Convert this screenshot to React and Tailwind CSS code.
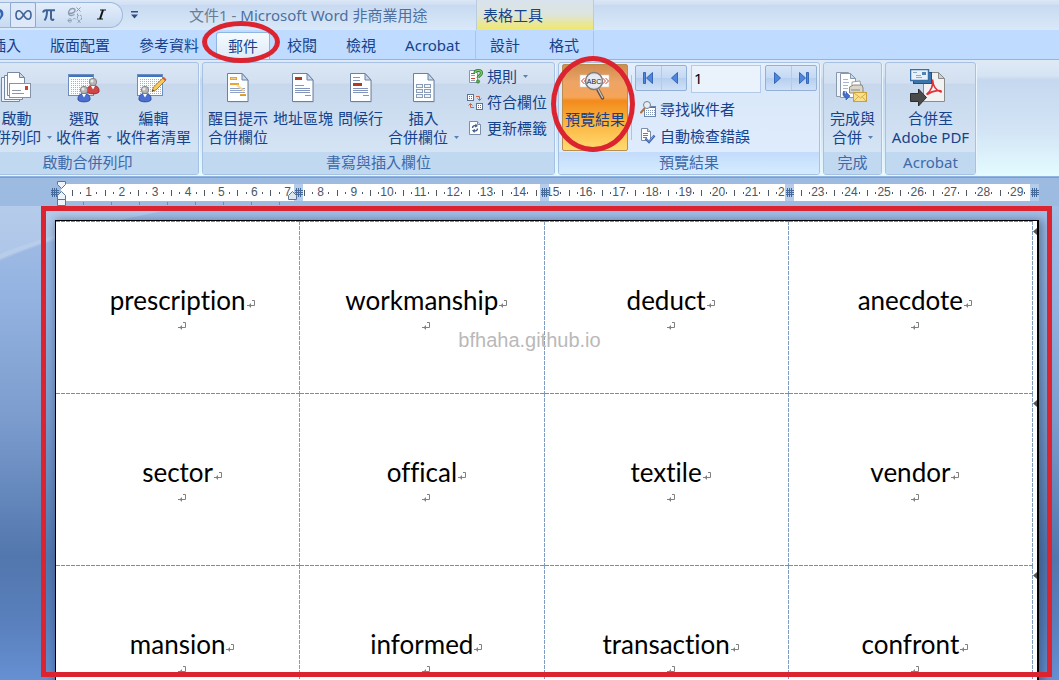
import React from "react";

const WORDS = [
  ["prescription", "workmanship", "deduct", "anecdote"],
  ["sector", "offical", "textile", "vendor"],
  ["mansion", "informed", "transaction", "confront"],
];

/* ---------- small marks ---------- */

function Caret() {
  return (
    <svg width="5" height="3" viewBox="0 0 5 3" className="shrink-0" aria-hidden="true">
      <path d="M0 0h5L2.500 3z" fill="#5b80b5" />
    </svg>
  );
}

function ReturnMark() {
  return (
    <svg width="8" height="8" viewBox="0 0 8 8" fill="none" stroke="#808080" aria-hidden="true">
      <path d="M5 .5h2.500v5h-6" />
      <path d="M3.500 3.500v4M2.500 4.500v2M0 5.500h2" />
    </svg>
  );
}

function GridMark() {
  return (
    <svg width="9" height="17" viewBox="0 0 9 17" className="bg-[#b5cdea]" aria-hidden="true">
      <path d="M2.500 4v9M4.500 4v9M6.500 4v9M1 6.500h8M1 8.500h8M1 10.500h8" stroke="#456a99" fill="none" />
    </svg>
  );
}

/* ---------- large icons ---------- */

function Sheet({ x = 0, y = 0 }) {
  return (
    <g transform={`translate(${x} ${y})`}>
      <path d="M1.500 1.500h14l6 6v22h-20z" fill="#8fa0b8" opacity=".45" />
      <path d="M.5 .5h14.500l6 6.500v21.500H.5z" fill="#fdfeff" stroke="#6d819f" />
      <path d="M15 .5v6.500h6z" fill="#c9d9ef" stroke="#6d819f" />
    </g>
  );
}

function Person({ x, y, fill, dark }) {
  return (
    <g transform={`translate(${x} ${y})`}>
      <path d="M0 14c-.5-4 1.500-6.500 6-6.500s6.500 2.500 6 6.500c-1.500 2.500-10.500 2.500-12 0z" fill={fill} stroke={dark} strokeWidth=".8" />
      <path d="M4 8l2 3.500L8 8z" fill="#fff" />
      <circle cx="6" cy="4" r="3.700" fill="#b5b5b5" stroke="#777" strokeWidth=".8" />
      <circle cx="5" cy="3" r="1.500" fill="#e9e9e9" />
    </g>
  );
}

function Calendar() {
  const dots = [];
  for (let r = 0; r < 8; r++) {
    for (let c = 0; c < 11; c++) dots.push(<rect key={`${r}-${c}`} x={3 + c * 2} y={7 + r * 2} width="1" height="1" />);
  }
  return (
    <>
      <rect x=".5" y="2.500" width="25" height="21" fill="#fbfdff" stroke="#6c8dbd" />
      <rect x="1" y="3" width="24" height="2" fill="#3f74c4" />
      <g fill="#a3b3cc">{dots}</g>
    </>
  );
}

function StartMergeIcon() {
  return (
    <svg width="32" height="32" viewBox="0 0 32 32" aria-hidden="true">
      <path d="M1.500 5.500h14l4 4v20h-18z" fill="#eef3fa" stroke="#7589a5" />
      <path d="M4.500 3.500h14l4 4v20h-18z" fill="#f5f8fc" stroke="#7589a5" />
      <path d="M7.500 .5h12l5 5v18h-17z" fill="#fff" stroke="#7589a5" />
      <path d="M19.500 .5v5h5z" fill="#cbd9ec" stroke="#7589a5" />
      <rect x="9.500" y="11.500" width="21" height="14" fill="#fff" stroke="#8493a8" />
      <rect x="25" y="14" width="3" height="4" fill="#c9442f" />
      <path d="M12 18.500h9M12 21.500h12" stroke="#8c97a8" />
    </svg>
  );
}

function SelectRecipientsIcon() {
  return (
    <svg width="32" height="32" viewBox="0 0 32 32" aria-hidden="true">
      <Calendar />
      <Person x={19} y={6} fill="#d04545" dark="#8f2525" />
      <Person x={10} y={14} fill="#4a6fd0" dark="#2b4690" />
    </svg>
  );
}

function EditRecipientsIcon() {
  return (
    <svg width="32" height="32" viewBox="0 0 32 32" aria-hidden="true">
      <Calendar />
      <Person x={2} y={14} fill="#4a6fd0" dark="#2b4690" />
      <path d="M15 19.500l1.500-4.500L26.500 5.500l2.500 2.500-10 10z" fill="#f6c95a" stroke="#9b6c1c" strokeWidth=".8" />
      <path d="M25.500 6.500l1.500-1.500 2.500 2.500-1.500 1.500z" fill="#d8573b" />
      <path d="M15 19.500l.8-2 1.200 1.200z" fill="#333" />
    </svg>
  );
}

function HighlightIcon() {
  return (
    <svg width="32" height="32" viewBox="0 0 32 32" aria-hidden="true">
      <Sheet x={5} y={1} />
      <path d="M8 5.500h7M8 16.500h15M8 18.500h15M8 20.500h15M18 23.500h6" stroke="#8fa1c6" />
      <rect x="8.500" y="5.500" width="6" height="2" fill="#f6d08a" stroke="#e6a630" />
      <rect x="8" y="11" width="9" height="2" fill="#e6a630" />
      <path d="M15 13l7 6" stroke="#fbd793" strokeWidth="2" />
      <path d="M18 22.500h6" stroke="#e6a630" />
    </svg>
  );
}

function AddressIcon() {
  return (
    <svg width="32" height="32" viewBox="0 0 32 32" aria-hidden="true">
      <Sheet x={5} y={1} />
      <rect x="8" y="5" width="7" height="3" fill="#b23a20" />
      <path d="M8 13.500h9M8 16.500h15M8 18.500h15M8 20.500h15M18 23.500h6" stroke="#8495bb" />
    </svg>
  );
}

function GreetingIcon() {
  return (
    <svg width="32" height="32" viewBox="0 0 32 32" aria-hidden="true">
      <Sheet x={5} y={1} />
      <rect x="8" y="11" width="9" height="3" fill="#b23a20" />
      <path d="M8 5.500h7M8 8.500h7M8 16.500h15M8 18.500h15M8 20.500h15M18 23.500h6" stroke="#8495bb" />
    </svg>
  );
}

function InsertFieldIcon() {
  return (
    <svg width="32" height="32" viewBox="0 0 32 32" aria-hidden="true">
      <Sheet x={5} y={1} />
      <g fill="#f1f5fb" stroke="#8b9cb9">
        <rect x="8.500" y="12.500" width="6" height="3" />
        <rect x="16.500" y="12.500" width="6" height="3" />
        <rect x="8.500" y="17.500" width="6" height="3" />
        <rect x="16.500" y="17.500" width="6" height="3" />
        <rect x="8.500" y="22.500" width="6" height="3" />
        <rect x="16.500" y="22.500" width="6" height="3" />
      </g>
    </svg>
  );
}

function PreviewIcon() {
  return (
    <svg width="32" height="32" viewBox="0 0 32 32" aria-hidden="true">
      <rect x="1" y="4" width="29" height="12" fill="#fff" stroke="#d9cbb8" strokeWidth=".6" />
      <path d="M5.500 7l-3 3 3 3M8.500 7l-3 3 3 3M23.500 7l3 3-3 3M26.500 7l3 3-3 3" stroke="#c9442f" fill="none" />
      <path d="M18.500 18l5 9" stroke="#5f5148" strokeWidth="3.500" strokeLinecap="round" />
      <path d="M19 18l4.500 8.500" stroke="#c9bfb6" strokeWidth="1.500" strokeLinecap="round" />
      <circle cx="15" cy="10" r="8.500" fill="#e2e9ef" fillOpacity=".9" stroke="#7b7b80" strokeWidth="1.500" />
      <text x="15" y="13" textAnchor="middle" fontSize="7" fontFamily="Liberation Sans, sans-serif" fill="#222">ABC</text>
    </svg>
  );
}

function FinishIcon() {
  return (
    <svg width="32" height="32" viewBox="0 0 32 32" aria-hidden="true">
      <path d="M.5 .5h12v24H.5z" fill="#f0f4fa" stroke="#8a98ad" />
      <path d="M4.500 1.500h10l5 5v19h-15z" fill="#fff" stroke="#8a98ad" />
      <path d="M14.500 1.500v5h5z" fill="#cbd9ec" stroke="#8a98ad" />
      <path d="M7 7.500h5M7 10.500h6M7 13.500h5M7 16.500h5M7 19.500h4" stroke="#a9b7cb" />
      <path d="M16 10l8-1 1 6h-9z" fill="#fff" stroke="#888" strokeWidth=".8" />
      <path d="M13.500 15l4-2h8.500l1 3v5h-13.500z" fill="#d9d6cc" stroke="#77736b" strokeWidth=".8" />
      <path d="M15 18h9" stroke="#8c887d" />
      <rect x="17.500" y="20.500" width="13" height="9" fill="#fbe08a" stroke="#c9a03f" />
      <path d="M18 21l6.500 5 6-5M18 29l4.500-4.500M30 29l-4-4.500" stroke="#c9a03f" fill="none" strokeWidth=".8" />
      <path d="M8 19c-2 3-1 6 2 6.500v2.500l4-4-4-4v2.500c-1 0-1.500-1.500-2-3.500z" fill="#3f6fd0" stroke="#2b4f9c" strokeWidth=".6" />
    </svg>
  );
}

function AcrobatIcon() {
  return (
    <svg width="42" height="38" viewBox="0 0 42 38" aria-hidden="true">
      <path d="M13.500 3.500h15l6 6v23h-21z" fill="#f2f2f2" stroke="#8b8b8b" />
      <path d="M28.500 3.500v6h6z" fill="#cfcfcf" stroke="#8b8b8b" />
      <path d="M22.500 10.500c.5 6 3 11 8.500 12.500 1.500-2-7-2.500-14 2.500M22.500 10.500c1.500 5-2 12-6 15" stroke="#e0323a" strokeWidth="1.600" fill="none" strokeLinejoin="round" />
      <rect x="3.500" y="3.500" width="18" height="11" fill="#3d75ad" stroke="#22507f" />
      <rect x=".5" y=".5" width="18" height="11" fill="#e9f2fb" stroke="#3a70a8" strokeWidth="1.500" />
      <rect x="12" y="3" width="4" height="3" fill="#4f85bb" />
      <path d="M3 3.500h4M6 6.500h5M6 8.500h6" stroke="#8dabc9" />
      <path d="M.5 24.500h8v-4.500l8 8.500-8 8.500v-4.500h-8z" fill="#4a4a4a" stroke="#2d2d2d" />
    </svg>
  );
}

/* ---------- small icons ---------- */

function RulesIcon() {
  return (
    <svg width="16" height="16" viewBox="0 0 16 16" aria-hidden="true">
      <path d="M2.500 2.500h6l2 2v10h-8z" fill="#fff" stroke="#8a97aa" />
      <path d="M4 5.500h4M4 10.500h4" stroke="#c9442f" />
      <path d="M4 7.500h4M4 12.500h4" stroke="#8fa0bf" />
      <path d="M8 5c0-3.500 6.500-3.500 6.500 0 0 2.500-3.500 2.500-3.500 5" fill="none" stroke="#2f7d2f" strokeWidth="3" />
      <path d="M8 5c0-3.500 6.500-3.500 6.500 0 0 2.500-3.500 2.500-3.500 5" fill="none" stroke="#7cc96a" strokeWidth="1.400" />
      <circle cx="11" cy="13.500" r="1.600" fill="#5cb04a" stroke="#2f7d2f" strokeWidth=".8" />
    </svg>
  );
}

function MatchIcon() {
  return (
    <svg width="16" height="16" viewBox="0 0 16 16" aria-hidden="true">
      <g fill="#fff" stroke="#5d7190">
        <rect x=".5" y=".5" width="6" height="6" />
        <rect x="9.500" y="9.500" width="6" height="6" />
      </g>
      <path d="M2 2.500h3M2 4.500h3M11 11.500h3M11 13.500h3" stroke="#5d7190" strokeDasharray="1 1" />
      <path d="M9 2.500h3.500V6M10.500 4.500l2 2 2-2M7 13.500H3.500V10M1.500 11.500l2-2 2 2" stroke="#d2603f" fill="none" />
    </svg>
  );
}

function UpdateIcon() {
  return (
    <svg width="16" height="16" viewBox="0 0 16 16" aria-hidden="true">
      <path d="M2.500 1.500h8l3 3v10h-11z" fill="#fff" stroke="#7d8da5" />
      <path d="M10.500 1.500v3h3" fill="#cbd9ec" stroke="#7d8da5" />
      <path d="M5.500 8c0-2 2-3 4-2M10.500 8.500c0 2-2 3-4 2" fill="none" stroke="#3d5d90" strokeWidth="1.400" />
      <path d="M8.500 3.500l2.500 2.500-3 1.500zM7.500 13L5 10.500l3-1.500z" fill="#3d5d90" />
    </svg>
  );
}

function FindIcon() {
  return (
    <svg width="16" height="16" viewBox="0 0 16 16" aria-hidden="true">
      <rect x="4.500" y="5.500" width="11" height="10" fill="#fff" stroke="#6c86ad" />
      <path d="M5 6.500h10" stroke="#3f74c4" />
      <path d="M6 9.500h9M6 11.500h9M6 13.500h9" stroke="#7f96b8" strokeDasharray="1 1" />
      <path d="M4.500 7.500l-3.500 4" stroke="#b5713c" strokeWidth="2" strokeLinecap="round" />
      <circle cx="7" cy="4" r="3.500" fill="#e5eef7" stroke="#777e8a" />
    </svg>
  );
}

function CheckIcon() {
  return (
    <svg width="16" height="16" viewBox="0 0 16 16" aria-hidden="true">
      <path d="M1.500 .5h6l3 3v9h-9z" fill="#fff" stroke="#7d8da5" />
      <path d="M7.500 .5v3h3" fill="#cbd9ec" stroke="#7d8da5" />
      <path d="M3 5.500h5M3 7.500h5M3 9.500h4" stroke="#5a7fc0" />
      <path d="M5.500 10.500l3.500 3.500 5.500-6.500" stroke="#3d62ad" strokeWidth="2.400" fill="none" />
      <path d="M6 10.500l3 3 5-6" stroke="#86a8e4" strokeWidth="1" fill="none" />
    </svg>
  );
}

/* ---------- ribbon parts ---------- */

function BigButton({ icon, lines, caret }) {
  return (
    <button type="button" className="flex shrink-0 flex-col items-center">
      <span className="flex h-[38px] items-center">{icon}</span>
      <span className="flex flex-col items-center pt-[2px]">
        {lines.map((line, i) => (
          <span key={line} className="flex h-[19px] items-center gap-[6px] whitespace-nowrap">
            {line}
            {caret && i === lines.length - 1 && <Caret />}
          </span>
        ))}
      </span>
    </button>
  );
}

function SmallButton({ icon, label, caret }) {
  return (
    <button type="button" className="flex h-[26px] items-center gap-1 whitespace-nowrap">
      {icon}
      {label}
      {caret && (
        <span className="pl-[2px]">
          <Caret />
        </span>
      )}
    </button>
  );
}

function Group({ title, width, active, children }) {
  return (
    <section
      aria-label={title}
      className={`flex shrink-0 flex-col overflow-hidden rounded-[3px] border border-[#a6c1e3] shadow-[1px_1px_0_#eaf5fe] ${width} ${
        active
          ? "bg-[linear-gradient(#e6f0fc,#d9e8fa_20%,#e0edfd)]"
          : "bg-[linear-gradient(#dae6f4,#d2e0f1_18%,#c7d8ed_19%,#d9e8f7)]"
      }`}
    >
      <div className="flex flex-1">{children}</div>
      <h2
        className={`flex h-[22px] items-center justify-center whitespace-nowrap pb-px text-[#3e6aaa] ${
          active ? "bg-[linear-gradient(#c3dcfb,#d5ecff)]" : "bg-[#c1d8f1]"
        }`}
      >
        {title}
      </h2>
    </section>
  );
}

function NavPair({ children }) {
  return (
    <div className="flex h-[26px] w-[52px] divide-x divide-[#b3cbe8] rounded-[2px] border border-[#93b0d6] bg-[linear-gradient(#d6e5f8,#c4d9f3_50%,#b6cfee_51%,#cfe1f8)]">
      {children}
    </div>
  );
}

function NavButton({ label, children }) {
  return (
    <button type="button" aria-label={label} className="flex flex-1 items-center justify-center">
      <svg width="12" height="12" viewBox="0 0 12 12" fill="#4d86dc" stroke="#2257ab" strokeWidth=".8">
        {children}
      </svg>
    </button>
  );
}

function Ribbon() {
  return (
    <div className="h-[118px] overflow-hidden border-y border-[#8fb5e3] bg-[linear-gradient(#dfeaf6,#d5e3f3_14%,#c5d8ef_17%,#d2e4f5_60%,#e4fbff)]">
      <div className="-ml-6 flex h-[115px] gap-[3px] pt-[2px]">
        <Group title="啟動合併列印" width="w-[223px]">
          <div className="flex flex-1 items-start justify-end gap-1 pr-[7px] pt-[6px]">
            <BigButton icon={<StartMergeIcon />} lines={["啟動", "合併列印"]} caret />
            <BigButton icon={<SelectRecipientsIcon />} lines={["選取", "收件者"]} caret />
            <BigButton icon={<EditRecipientsIcon />} lines={["編輯", "收件者清單"]} />
          </div>
        </Group>

        <Group title="書寫與插入欄位" width="w-[353px]">
          <div className="flex items-start gap-[5px] pl-[5px] pt-[6px]">
            <BigButton icon={<HighlightIcon />} lines={["醒目提示", "合併欄位"]} />
            <BigButton icon={<AddressIcon />} lines={["地址區塊"]} />
            <BigButton icon={<GreetingIcon />} lines={["問候行"]} />
            <BigButton icon={<InsertFieldIcon />} lines={["插入", "合併欄位"]} caret />
          </div>
          <div className="flex flex-1 flex-col pl-2">
            <SmallButton icon={<RulesIcon />} label="規則" caret />
            <SmallButton icon={<MatchIcon />} label="符合欄位" />
            <SmallButton icon={<UpdateIcon />} label="更新標籤" />
          </div>
        </Group>

        <Group title="預覽結果" width="w-[262px]" active>
          <div className="my-px ml-[3px] flex w-[66px] shrink-0">
            <button
              type="button"
              aria-pressed="true"
              className="flex flex-1 flex-col items-center rounded-[2px] border border-[#b98e51] bg-[linear-gradient(#cf8d4f,#eda466_20%,#f6a458_38%,#f28a1d_42%,#fbb03a_65%,#ffdb70)] pt-[3px]"
            >
              <span className="flex h-[38px] items-center">
                <PreviewIcon />
              </span>
              <span className="flex h-[26px] items-center whitespace-nowrap">預覽結果</span>
            </button>
          </div>
          <div className="mx-[3px] my-3 w-px bg-[#a9c4e6]" />
          <div className="flex flex-1 flex-col pr-[2px] pt-[2px]">
            <div className="flex items-start justify-between">
              <NavPair>
                <NavButton label="第一筆記錄">
                  <path d="M1.500 .5h2v11h-2zM10.500 .5v11L4.500 6z" />
                </NavButton>
                <NavButton label="上一筆記錄">
                  <path d="M9.500 .5v11L3.500 6z" />
                </NavButton>
              </NavPair>
              <input
                aria-label="記錄"
                defaultValue="1"
                className="h-[28px] w-[70px] border border-[#b3cbe8] bg-[#eaf2fc] px-[2px] pb-[2px] text-black"
              />
              <NavPair>
                <NavButton label="下一筆記錄">
                  <path d="M2.500 .5v11L8.500 6z" />
                </NavButton>
                <NavButton label="最後一筆記錄">
                  <path d="M8.500 .5h2v11h-2zM1.500 .5v11L7.500 6z" />
                </NavButton>
              </NavPair>
            </div>
            <div className="flex flex-col gap-px pl-[5px] pt-[3px]">
              <SmallButton icon={<FindIcon />} label="尋找收件者" />
              <SmallButton icon={<CheckIcon />} label="自動檢查錯誤" />
            </div>
          </div>
        </Group>

        <Group title="完成" width="w-[59px]">
          <div className="flex flex-1 justify-center pt-[6px]">
            <BigButton icon={<FinishIcon />} lines={["完成與", "合併"]} caret />
          </div>
        </Group>

        <Group title="Acrobat" width="w-[91px]">
          <div className="flex flex-1 justify-center pt-[6px]">
            <BigButton icon={<AcrobatIcon />} lines={["合併至", "Adobe PDF"]} />
          </div>
        </Group>
      </div>
    </div>
  );
}

/* ---------- title bar and tabs ---------- */

function TitleBar() {
  return (
    <header className="flex h-[30px] overflow-hidden bg-[linear-gradient(#dbe7f6,#d0dff2_16%,#c8daf1_18%,#d9e9f9)]">
      <div className="my-[2px] flex w-[123px] shrink-0 items-center rounded-r-full border border-l-0 border-[#9db8dc] bg-[linear-gradient(#e3eefb,#c8daf1)] pb-px">
        <button type="button" aria-label="復原" className="flex w-[10px] justify-start">
          <svg width="4" height="14" viewBox="0 0 4 14">
            <path d="M0 1c3 1 4 4 3 7l-3 4V9c1-2 1-4 0-5z" fill="#3565b5" />
          </svg>
        </button>
        <button
          type="button"
          aria-label="無限大"
          className="flex h-[26px] w-[26px] items-center justify-center rounded-[2px] border border-[#8ea9cc] bg-[#dde9f8]"
        >
          <svg width="17" height="12" viewBox="0 0 17 12" fill="none" stroke="#3f6396" strokeWidth="1.600">
            <path d="M8.500 6C6.500 3 5.500 1.800 4 1.800 2.300 1.800 1 3.500 1 6s1.300 4.200 3 4.200S6.500 9 8.500 6s3-4.200 4.500-4.200c1.700 0 3 1.700 3 4.200s-1.300 4.200-3 4.200S10.500 9 8.500 6z" />
          </svg>
        </button>
        <button type="button" aria-label="方程式" className="flex w-[26px] justify-center">
          <svg width="14" height="14" viewBox="0 0 14 14" fill="none" stroke="#3f6396">
            <path d="M1 4.500C1.500 2.500 2.500 2.200 4 2.200h9" strokeWidth="2" />
            <path d="M5 3c0 4-.5 7-2.500 9.500M9 3v7c0 2 1.500 2.500 3 1" strokeWidth="2" />
          </svg>
        </button>
        <button type="button" aria-label="指數" className="flex w-[26px] justify-center">
          <svg width="17" height="18" viewBox="0 0 17 18" fill="none" stroke="#8d9bb0">
            <path d="M2 7.500c4 0 6-1.500 6-3.500S3.500 1.500 2 5s1 6 5.500 3.500" strokeWidth="1.400" />
            <path d="M9.500 1.500l4 4M13.500 1.500l-4 4" />
            <path d="M10.500 7.500v6M10.500 10.500c1.500-2 4-1.500 4 0v3" strokeDasharray="2 1" />
            <path d="M1 14.500h3.500c0-2.500-3.500-2-3.500 0 0 2 2.500 2 3.500 1M6 13.500l1.500-1.500L9 13.500M10.500 13.500l3 3.500M13.500 13.500l-3 3.500" strokeWidth=".9" />
          </svg>
        </button>
        <button type="button" aria-label="斜體" className="flex w-[26px] justify-center">
          <svg width="11" height="11" viewBox="0 0 11 11" fill="none" stroke="#111">
            <path d="M4 1h6M1 10h6" strokeWidth="1.200" />
            <path d="M7 1L4 10" strokeWidth="2" />
          </svg>
        </button>
      </div>
      <button type="button" aria-label="自訂快速存取工具列" className="flex w-[22px] shrink-0 items-center justify-center">
        <svg width="7" height="8" viewBox="0 0 7 8" fill="#2c4f86">
          <path d="M0 0h7v1.500H0zM0 3.500h7L3.500 7.500z" />
        </svg>
      </button>
      <h1 className="ml-[44px] flex w-[287px] shrink-0 items-center gap-1 whitespace-nowrap text-[#4d6f9f]">
        <span className="text-[#6c7c92]">文件1 -</span>
        <span>Microsoft Word 非商業用途</span>
      </h1>
      <div className="flex w-[118px] shrink-0 items-center border-x border-[#b9cbdc] bg-[linear-gradient(#d9e3ee,#dde5da_50%,#f2e868)] pl-[6px] text-[#15428b]">
        表格工具
      </div>
    </header>
  );
}

function Tab({ children }) {
  return (
    <button type="button" role="tab" aria-selected="false" className="h-full shrink-0 whitespace-nowrap px-[14px]">
      {children}
    </button>
  );
}

function Tabs() {
  return (
    <nav className="h-[29px] bg-[#bfdbff]">
      <div role="tablist" className="-ml-6 flex h-full gap-px pl-px pt-px">
        <Tab>插入</Tab>
        <Tab>版面配置</Tab>
        <Tab>參考資料</Tab>
        <div className="relative z-10 flex shrink-0 px-[2px] pt-px">
          <button
            type="button"
            role="tab"
            aria-selected="true"
            className="rounded-t-[3px] border border-b-0 border-[#8fb5e3] bg-[linear-gradient(#f4faff,#dfeaf6)] px-[11px]"
          >
            郵件
          </button>
          <span className="pointer-events-none absolute -bottom-[4px] -left-[12px] -right-[8px] -top-[10px] rounded-[50%] border-[5px] border-[#dc2430]" />
        </div>
        <Tab>校閱</Tab>
        <Tab>檢視</Tab>
        <Tab>Acrobat</Tab>
        <div className="flex gap-px border-x border-[#a9c4e6]">
          <Tab>設計</Tab>
          <Tab>格式</Tab>
        </div>
      </div>
    </nav>
  );
}

/* ---------- ruler ---------- */

function Ruler() {
  const numbers = Array.from({ length: 29 }, (_, i) => i + 1);
  return (
    <div className="relative h-[29px] shrink-0 border-t border-[#7f9dc8] bg-[#9dbae0] pl-[55px] pr-[20px] pt-[6px]">
      <div className="flex h-[17px] bg-white pl-[13px] pr-[10px] font-['Liberation_Sans',sans-serif] text-xs font-normal leading-[17px] text-[#4c5866]">
        {numbers.map((n) => (
          <div key={n} className="grid flex-1 grid-cols-4 items-center justify-items-center">
            <span className="h-[6px] w-px bg-[#4c5866]" />
            <span className="h-[2px] w-px bg-[#4c5866]" />
            <span className="flex w-0 justify-center">{n}</span>
            <span className="h-[2px] w-px bg-[#4c5866]" />
          </div>
        ))}
      </div>
      <div className="absolute inset-y-[6px] left-[58px] right-[20px] grid grid-cols-4 justify-items-end">
        <GridMark />
        <GridMark />
        <GridMark />
        <GridMark />
      </div>
      <svg width="242" height="27" viewBox="0 0 242 27" className="absolute left-[50px] top-[2px]" aria-hidden="true">
        <rect x="0" y="4" width="11" height="17" fill="#9dbae0" />
        <path d="M2.500 8v9M4.500 8v9M6.500 8v9M1 10.500h8M1 12.500h8M1 14.500h8" stroke="#456a99" fill="none" />
        <path d="M33.500 22v3M61.500 22v3M89.500 22v3M117.500 22v3M145.500 22v3M173.500 22v3M201.500 22v3M229.500 22v3" stroke="#6d8db8" />
        <g fill="#eef3fa" stroke="#5a7696">
          <path d="M7.500 1.500h8v3l-4 4-4-4z" />
          <path d="M11.500 11.500l4 4v4h-8v-4z" />
          <path d="M7.500 19.500h8v6h-8z" />
        </g>
      </svg>
      <svg width="9" height="9" viewBox="0 0 9 9" className="absolute left-[288px] top-[13px]" aria-hidden="true">
        <path d="M4.500 .5l4 4v4h-8v-4z" fill="#dfe6ee" stroke="#5a7696" />
      </svg>
    </div>
  );
}

/* ---------- document ---------- */

const CELL =
  "h-[172px] p-0 pl-2 text-center align-middle bg-no-repeat bg-[image:repeating-linear-gradient(90deg,#6c93ae_0_4px,transparent_4px_5px),repeating-linear-gradient(#7f9dc2_0_4px,transparent_4px_5px)] bg-[position:0_0,100%_0] bg-[size:100%_1px,1px_100%]";

function DocumentPage() {
  return (
    <main className="relative min-h-0 flex-1 overflow-hidden bg-[linear-gradient(#a3bfe6,#93b2e0_20%,#7b9ccd_45%,#5277ae_74%,#5a80bd_88%,#6590d2)] pl-[55px] pr-[20px] pt-[14px]">
      <svg width="320" height="90" viewBox="0 0 320 90" className="absolute left-0 top-0" aria-hidden="true">
        <path d="M0 0h190C120 12 60 28 0 53z" fill="#fff" opacity=".2" />
        <path d="M0 48c20-8 38-14 60-20v5C40 39 20 46 0 55z" fill="#fff" opacity=".12" />
      </svg>
      <div className="relative border border-r-2 border-black bg-white pr-1 shadow-[2px_2px_9px_2px_rgba(40,65,105,0.55)]">
        <table className="w-full table-fixed border-collapse">
          <tbody>
            {WORDS.map((row) => (
              <tr key={row[0]}>
                {row.map((word, i) => (
                  <td key={word} className={i === row.length - 1 ? `relative ${CELL}` : CELL}>
                    <p className="flex items-center justify-center gap-px pt-px font-['Lato',sans-serif] text-[26px] font-normal leading-9 text-black [font-variant-ligatures:none]">
                      {word}
                      <span className="pt-2">
                        <ReturnMark />
                      </span>
                    </p>
                    <p className="flex h-4 items-center justify-center">
                      <ReturnMark />
                    </p>
                    {i === row.length - 1 && (
                      <svg width="4" height="7" viewBox="0 0 4 7" className="absolute -right-1 top-[7px]" aria-hidden="true">
                        <path d="M4 0v7L0 3.500z" fill="#555" />
                      </svg>
                    )}
                  </td>
                ))}
              </tr>
            ))}
          </tbody>
        </table>
      </div>
      <div className="pointer-events-none absolute bottom-[3px] left-[41px] right-[7px] top-0 border-[5px] border-[#dc2430]" />
      <p className="pointer-events-none absolute inset-x-0 top-[122px] text-center font-['Liberation_Sans',sans-serif] text-xl leading-6 text-[#b9b9b9]">
        bfhaha.github.io
      </p>
    </main>
  );
}

export default function App() {
  return (
    <div className="flex h-screen flex-col overflow-hidden font-['Noto_Sans','Noto_Sans_CJK_TC',sans-serif] text-[15px] font-normal leading-[19px] text-[#15428b]">
      <TitleBar />
      <Tabs />
      <div className="relative">
        <Ribbon />
        <span className="pointer-events-none absolute -top-[3px] left-[551px] h-[96px] w-[84px] rounded-[50%] border-[5px] border-[#dc2430]" />
      </div>
      <Ruler />
      <DocumentPage />
    </div>
  );
}
